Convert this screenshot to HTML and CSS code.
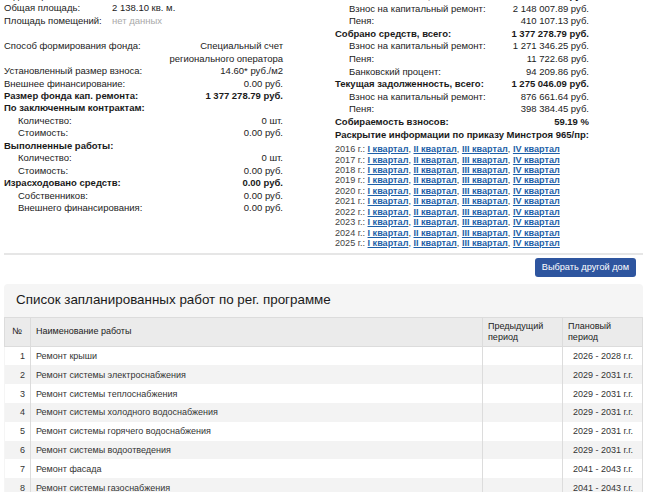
FILE: index.html
```html
<!DOCTYPE html>
<html lang="ru">
  <head>
    <meta charset="UTF-8" />
    <meta name="viewport" content="width=device-width, initial-scale=1.0" />
    <title>Капитальный ремонт</title>
    <link rel="stylesheet" href="styles.css">
  </head>
  <body>
    <div class="info">
      <div class="col col-left">
        <div class="area">
          <div class="area-row"><span>Год постройки:</span><span>1972</span></div>
          <div class="area-row"><span>Общая площадь:</span><span>2 138.10 кв. м.</span></div>
          <div class="area-row"><span>Площадь помещений:</span><span class="muted">нет данных</span></div>
        </div>

        <div class="rows">
          <div class="row"><span>Способ формирования фонда:</span><span class="val">Специальный счет<br>регионального оператора</span></div>
          <div class="row"><span>Установленный размер взноса:</span><span class="val">14.60* руб./м2</span></div>
          <div class="row"><span>Внешнее финансирование:</span><span class="val">0.00 руб.</span></div>
          <div class="row bold"><span>Размер фонда кап. ремонта:</span><span class="val">1 377 278.79 руб.</span></div>
          <div class="row bold"><span>По заключенным контрактам:</span></div>
          <div class="row sub"><span>Количество:</span><span class="val">0 шт.</span></div>
          <div class="row sub"><span>Стоимость:</span><span class="val">0.00 руб.</span></div>
          <div class="row bold"><span>Выполненные работы:</span></div>
          <div class="row sub"><span>Количество:</span><span class="val">0 шт.</span></div>
          <div class="row sub"><span>Стоимость:</span><span class="val">0.00 руб.</span></div>
          <div class="row bold"><span>Израсходовано средств:</span><span class="val">0.00 руб.</span></div>
          <div class="row sub"><span>Собственников:</span><span class="val">0.00 руб.</span></div>
          <div class="row sub"><span>Внешнего финансирования:</span><span class="val">0.00 руб.</span></div>
        </div>
      </div>

      <div class="col col-right">
        <div class="rows">
          <div class="row bold"><span>Начислено взносов, всего:</span><span class="val">2 558 115.02 руб.</span></div>
          <div class="row sub"><span>Взнос на капитальный ремонт:</span><span class="val">2 148 007.89 руб.</span></div>
          <div class="row sub"><span>Пеня:</span><span class="val">410 107.13 руб.</span></div>
          <div class="row bold"><span>Собрано средств, всего:</span><span class="val">1 377 278.79 руб.</span></div>
          <div class="row sub"><span>Взнос на капитальный ремонт:</span><span class="val">1 271 346.25 руб.</span></div>
          <div class="row sub"><span>Пеня:</span><span class="val">11 722.68 руб.</span></div>
          <div class="row sub"><span>Банковский процент:</span><span class="val">94 209.86 руб.</span></div>
          <div class="row bold"><span>Текущая задолженность, всего:</span><span class="val">1 275 046.09 руб.</span></div>
          <div class="row sub"><span>Взнос на капитальный ремонт:</span><span class="val">876 661.64 руб.</span></div>
          <div class="row sub"><span>Пеня:</span><span class="val">398 384.45 руб.</span></div>
          <div class="row bold"><span>Собираемость взносов:</span><span class="val">59.19 %</span></div>
          <div class="row bold"><span>Раскрытие информации по приказу Минстроя 965/пр:</span></div>
        </div>

        <div class="quarters" id="quarters"></div>
      </div>
    </div>

    <div class="actions">
      <button class="btn">Выбрать другой дом</button>
    </div>

    <div class="works">
      <h2 class="works-title">Список запланированных работ по рег. программе</h2>
      <table class="works-table">
        <colgroup>
          <col class="w-num">
          <col>
          <col class="w-period">
          <col class="w-period">
        </colgroup>
        <thead>
          <tr>
            <th class="c-num">№</th>
            <th>Наименование работы</th>
            <th>Предыдущий<br>период</th>
            <th>Плановый<br>период</th>
          </tr>
        </thead>
        <tbody>
          <tr><td class="c-num">1</td><td>Ремонт крыши</td><td></td><td class="c-plan">2026 - 2028 г.г.</td></tr>
          <tr><td class="c-num">2</td><td>Ремонт системы электроснабжения</td><td></td><td class="c-plan">2029 - 2031 г.г.</td></tr>
          <tr><td class="c-num">3</td><td>Ремонт системы теплоснабжения</td><td></td><td class="c-plan">2029 - 2031 г.г.</td></tr>
          <tr><td class="c-num">4</td><td>Ремонт системы холодного водоснабжения</td><td></td><td class="c-plan">2029 - 2031 г.г.</td></tr>
          <tr><td class="c-num">5</td><td>Ремонт системы горячего водоснабжения</td><td></td><td class="c-plan">2029 - 2031 г.г.</td></tr>
          <tr><td class="c-num">6</td><td>Ремонт системы водоотведения</td><td></td><td class="c-plan">2029 - 2031 г.г.</td></tr>
          <tr><td class="c-num">7</td><td>Ремонт фасада</td><td></td><td class="c-plan">2041 - 2043 г.г.</td></tr>
          <tr><td class="c-num">8</td><td>Ремонт системы газоснабжения</td><td></td><td class="c-plan">2041 - 2043 г.г.</td></tr>
        </tbody>
      </table>
    </div>

    <script>
      const quarters = ["I квартал", "II квартал", "III квартал", "IV квартал"];
      const box = document.getElementById("quarters");

      for (let year = 2016; year <= 2025; year++) {
        const line = document.createElement("div");
        line.className = "quarter-line";
        line.append(year + " г.: ");
        quarters.forEach((q, i) => {
          const a = document.createElement("a");
          a.href = "#";
          a.textContent = q;
          line.append(a);
          if (i < quarters.length - 1) line.append(", ");
        });
        box.append(line);
      }
    </script>
  </body>
</html>
```

FILE: styles.css
```css
body {
  margin: 0;
  font-family: "Liberation Sans", Arial, sans-serif;
  font-size: 10px;
  color: #222;
  background: #fff;
}

.info {
  display: flex;
  margin: -10px 13px 0 4px;
  padding-bottom: 4px;
  border-bottom: 2px solid #e6e6e6;
  font-size: 9.5px;
}

.col-left {
  width: 279px;
}

.col-right {
  width: 254px;
  margin-left: 52px;
}

.area-row {
  display: grid;
  grid-template-columns: 108px 1fr;
  line-height: 12.4px;
  white-space: nowrap;
}

.muted {
  color: #aaa;
}

.rows {
  line-height: 12.45px;
}

.col-left .rows {
  margin-top: 13px;
}

.row {
  display: flex;
  justify-content: space-between;
  white-space: nowrap;
}

.row .val {
  text-align: right;
}

.row.bold {
  font-weight: bold;
  color: #1a1a1a;
}

.row.sub {
  padding-left: 14px;
}

.col-right .rows {
  line-height: 12.6px;
}

.quarters {
  margin-top: 3px;
  font-size: 9.1px;
  line-height: 10.45px;
  color: #444;
  white-space: nowrap;
}

.quarter-line a {
  color: #1d5fa8;
  font-weight: bold;
  text-decoration: underline;
}

.actions {
  display: flex;
  justify-content: flex-end;
  padding: 3px 20px 0 0;
}

.btn {
  height: 19px;
  padding: 0 7px;
  border: none;
  border-radius: 3px;
  background-color: #2e559f;
  color: #fff;
  font-family: inherit;
  font-size: 9.2px;
  cursor: pointer;
}

.works {
  margin: 7px 13px 0 4px;
  background-color: #f5f5f5;
  border-radius: 4px 4px 0 0;
}

.works-title {
  margin: 0;
  padding: 8px 12px 0;
  height: 25px;
  font-size: 13.4px;
  font-weight: normal;
  line-height: 16px;
  color: #1a1a1a;
}

.works-table {
  width: 100%;
  table-layout: fixed;
  border-collapse: collapse;
  font-size: 9px;
  color: #333;
}

.w-num {
  width: 26px;
}

.w-period {
  width: 80px;
}

.works-table th {
  height: 28px;
  padding: 0 5px;
  background-color: #ebebeb;
  border: 1px solid #dcdcdc;
  font-weight: normal;
  text-align: left;
  line-height: 11px;
  color: #222;
}

.works-table td {
  height: 18.8px;
  padding: 0 5px;
  border-left: 1px solid #dcdcdc;
  border-right: 1px solid #dcdcdc;
  white-space: nowrap;
}

.works-table td:first-child {
  border-left: none;
}

.works-table tbody tr:nth-child(odd) {
  background-color: #fff;
}

.works-table tbody tr:nth-child(even) {
  background-color: #f3f3f3;
}

.works-table th.c-num {
  padding-left: 7px;
}

.works-table td.c-num {
  text-align: right;
}

.works-table td.c-plan {
  text-align: right;
  padding-right: 9px;
}
```
